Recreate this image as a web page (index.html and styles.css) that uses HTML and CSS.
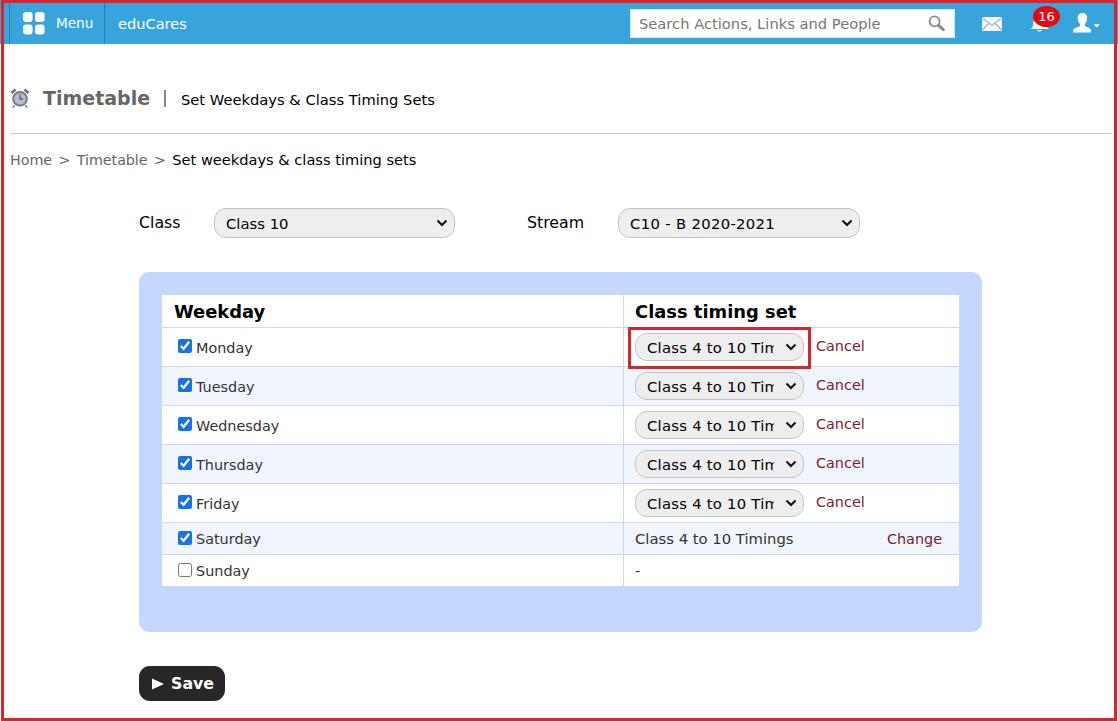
FILE: index.html
```html
<!DOCTYPE html>
<html lang="en">
<head>
<meta charset="utf-8">
<title>Timetable</title>
<link rel="stylesheet" href="styles.css">
</head>
<body>
<header class="topbar">
  <a class="menu">
    <svg class="grid-icon" width="22" height="23" viewBox="0 0 22 23" fill="#fff"><rect x="0" y="0" width="9.6" height="10" rx="3"/><rect x="12" y="0" width="9.6" height="10" rx="3"/><rect x="0" y="12.5" width="9.6" height="10" rx="3"/><rect x="12" y="12.5" width="9.6" height="10" rx="3"/></svg>
    <span>Menu</span>
  </a>
  <a class="brand">eduCares</a>
  <div class="search">
    <span>Search Actions, Links and People</span>
    <svg width="17" height="17" viewBox="0 0 17 17" fill="none" stroke="#8c8c8c"><circle cx="6.6" cy="6.4" r="5" stroke-width="1.9"/><path d="M10.5 10.3L15.3 14.6" stroke-width="3" stroke-linecap="round"/></svg>
  </div>
  <svg class="mail" width="20" height="14" viewBox="0 0 20 14"><rect width="20" height="14" fill="#fff"/><path d="M0 .5L10 8.5L20 .5M0 13.5L7 6.3M20 13.5L13 6.3" fill="none" stroke="#8fb9c9" stroke-width="1.3"/></svg>
  <div class="alerts">
    <svg width="20" height="20" viewBox="0 0 20 20" fill="#fff"><path d="M1 16C4 13 3 10 4 6C5 3 7 2 9 2C13 2 14 5 14.500 8C15 12 15 13 19 16ZM7 17H12Q9.500 20 7 17Z"/></svg>
    <span class="badge">16</span>
  </div>
  <svg class="user" width="28" height="22" viewBox="0 0 28 22" fill="#fff"><path d="M9.500 1C13 1 14.500 3.500 14 7C13.800 9 13 10.500 12 12V14C14 15.800 18 15.500 18 19V20.500H0V19C0 15.500 5 15.800 7 14V12C5.500 10.500 5 9 4.800 7C4.500 3.500 6 1 9.500 1Z"/><path d="M20.500 12.300H27L23.700 15.600Z"/></svg>
</header>
<main>
  <div class="title">
    <svg width="20" height="21" viewBox="0 0 20 21" fill="none"><path d="M4.500 17L3 20M15.500 17L17 20" stroke="#777c88" stroke-width="1.4"/><path d="M1.500 5L5.500 1.500M18.500 5L14.500 1.500" stroke="#6a7080" stroke-width="2.4"/><circle cx="10" cy="10.800" r="6.800" fill="#b5bed0" stroke="#767b88" stroke-width="2"/><path d="M10 6.500V11H13" stroke="#555e70" stroke-width="1.4"/></svg>
    <h1>Timetable</h1><i class="bar"></i><span>Set Weekdays &amp; Class Timing Sets</span>
  </div>
  <nav class="crumbs"><a>Home</a><a>&gt;</a><a>Timetable</a><a>&gt;</a><span>Set weekdays &amp; class timing sets</span></nav>
  <div class="content">
    <div class="filters">
      <label class="class-label">Class</label>
      <select class="wide first"><option>Class 10</option></select>
      <label class="stream-label">Stream</label>
      <select class="wide stream"><option>C10 - B 2020-2021</option></select>
    </div>
    <section class="panel">
      <div class="row head"><div class="day">Weekday</div><div class="set">Class timing set</div></div>
      <div class="row tall"><label class="day"><input type="checkbox" checked>Monday</label><div class="set"><span class="marked"><select><option>Class 4 to 10 Timings</option></select></span><a class="cancel">Cancel</a></div></div>
      <div class="row tall alt"><label class="day"><input type="checkbox" checked>Tuesday</label><div class="set"><select><option>Class 4 to 10 Timings</option></select><a class="cancel">Cancel</a></div></div>
      <div class="row tall"><label class="day"><input type="checkbox" checked>Wednesday</label><div class="set"><select><option>Class 4 to 10 Timings</option></select><a class="cancel">Cancel</a></div></div>
      <div class="row tall alt"><label class="day"><input type="checkbox" checked>Thursday</label><div class="set"><select><option>Class 4 to 10 Timings</option></select><a class="cancel">Cancel</a></div></div>
      <div class="row tall"><label class="day"><input type="checkbox" checked>Friday</label><div class="set"><select><option>Class 4 to 10 Timings</option></select><a class="cancel">Cancel</a></div></div>
      <div class="row alt"><label class="day"><input type="checkbox" checked>Saturday</label><div class="set"><span class="value">Class 4 to 10 Timings</span><a class="change">Change</a></div></div>
      <div class="row last"><label class="day"><input type="checkbox">Sunday</label><div class="set">-</div></div>
    </section>
    <button class="save"><svg width="12" height="12" viewBox="0 0 12 12" fill="#fff"><path d="M0 .5L12 6L0 11.500Z"/></svg>Save</button>
  </div>
</main>
<div class="frame"></div>
</body>
</html>
```
FILE: styles.css
```css
*, *::after { box-sizing: border-box; }
body { margin: 0; height: 721px; overflow: hidden; background: #fff; font: 14.6px/20px "DejaVu Sans", Verdana, sans-serif; color: #000; }
.topbar { height: 44px; padding-top: 3px; display: flex; align-items: center; background: #38a4dc; color: #fff; }
.menu { width: 96px; height: 41px; margin-left: 9px; padding-left: 13px; display: flex; gap: 11px; align-items: center; border-left: 1px solid #247fb4; border-right: 1px solid #247fb4; font-size: 13.6px; }
.menu span { margin-top: -2px; }
.brand { flex: none; width: 513px; padding-left: 13px; margin-top: 1px; }
.search { flex: none; width: 325px; height: 29px; margin-left: 12px; padding: 0 9px 0 8px; display: flex; align-items: center; justify-content: space-between; background: #fff; border: 1px solid #d5e3ea; color: #777; font-size: 14.7px; white-space: nowrap; }
.mail { margin-left: 27px; flex: none; }
.alerts { position: relative; width: 20px; height: 20px; margin: -2px 0 0 28px; flex: none; }
.badge { position: absolute; left: 3px; top: -7px; width: 27px; height: 21px; border-radius: 50%; background: #e8090f; font-size: 13px; line-height: 21px; text-align: center; }
.user { margin: -1px 0 0 23px; flex: none; }
.title { height: 90px; margin: 0 6px 0 10px; padding-top: 20px; display: flex; align-items: center; border-bottom: 1px solid #ccc; }
.title svg { margin-top: -1px; }
h1 { margin: -1px 0 0 13px; width: 108px; font-size: 19px; line-height: 24px; color: #666; }
.bar { width: 2px; height: 17px; margin: 0 15px 0 13px; background: #888; }
.title span { padding-top: 3px; font-size: 14.7px; }
.crumbs { display: flex; gap: 7px; padding: 16px 0 0 10px; color: #666; height: 36px; font-size: 14.3px; letter-spacing: -.05px; white-space: nowrap; }
.crumbs a { margin-right: -.6px; }
.crumbs span { color: #000; font-size: 14.6px; letter-spacing: 0; }
.content { padding-left: 139px; }
.filters { display: flex; align-items: center; height: 30px; margin-top: 38px; font-size: 15.8px; }
.class-label { width: 75px; }
.stream-label { width: 91px; margin-left: 72px; }
select { appearance: none; width: 169px; height: 28px; padding: 0 29px 0 11px; background: #eee url("data:image/svg+xml,%3Csvg xmlns='http://www.w3.org/2000/svg' width='12' height='8'%3E%3Cpath d='M1.500 1.500L6 6L10.500 1.500' fill='none' stroke='%23111' stroke-width='2.1'/%3E%3C/svg%3E") no-repeat right 6px center; border: 1px solid #c4c4c4; border-radius: 12px; font: 14.8px "DejaVu Sans", Verdana, sans-serif; color: #000; }
.tall select { letter-spacing: .25px; }
select.wide { width: 242px; height: 30px; }
select.first { width: 241px; }
select.stream { letter-spacing: .33px; }
.panel { width: 843px; height: 360px; margin-top: 34px; padding: 23px 23px 0; border-radius: 10px; background: #c4d8ff; }
.row { height: 32px; display: grid; grid-template-columns: 461px 1fr; background: #fff; border-bottom: 1px solid #c8daec; color: #333; font-size: 14.4px; }
.tall { height: 39px; }
.alt { background: #f1f6fe; }
.head { height: 33px; font-weight: bold; font-size: 17.9px; color: #000; }
.day { display: flex; align-items: center; padding-left: 16px; padding-top: 1px; }
.head .day { padding-left: 12px; }
.last { border-bottom: 0; height: 31px; }
.set { display: flex; align-items: center; padding-left: 11px; border-left: 1px solid #c8daec; white-space: nowrap; }
.head .set { padding-top: 1px; }
input { width: 14px; height: 14px; margin: -3px 4px 0 0; accent-color: #1573e6; }
.value { font-size: 14.8px; }
.cancel { margin: -3px 0 0 12px; color: #7b1c2c; }
.change { margin-left: auto; padding-right: 17px; color: #7b1c2c; }
.marked { position: relative; display: flex; }
.marked::after { content: ""; position: absolute; left: -7px; top: -6px; width: 183px; height: 42px; border: 3px solid #cf2830; pointer-events: none; }
.save { display: flex; align-items: center; gap: 7px; width: 86px; height: 35px; margin-top: 34px; padding: 0 0 0 13px; border: 0; border-radius: 11px; background: #272727; color: #fff; font: bold 15.8px "DejaVu Sans", Verdana, sans-serif; }
.frame { position: absolute; inset: 0 1px 0 1px; border: 3px solid #d8262c; pointer-events: none; }
```
